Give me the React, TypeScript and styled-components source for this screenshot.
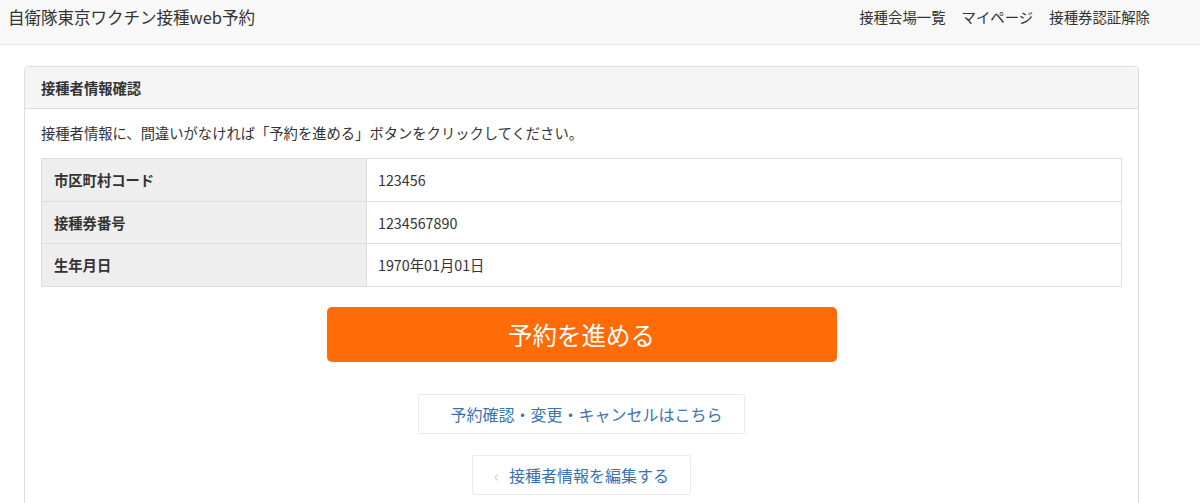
import React from 'react';
import styled, { createGlobalStyle } from 'styled-components';

const COLORS = {
  TEXT: '#333333',
  NAV_BG: '#f8f8f8',
  NAV_BORDER: '#e7e7e7',
  BORDER: '#dddddd',
  PANEL_HEAD: '#f5f5f5',
  LABEL_BG: '#eeeeee',
  ORANGE: '#ff6b07',
  LINK: '#3a72b0',
  WHITE: '#ffffff',
};

const FONT = `"Noto Sans CJK JP", "Noto Sans", "Liberation Sans", sans-serif`;

const rows = [
  { label: '市区町村コード', value: '123456' },
  { label: '接種券番号', value: '1234567890' },
  { label: '生年月日', value: '1970年01月01日' },
];

const navLinks = ['接種会場一覧', 'マイページ', '接種券認証解除'];

const GlobalStyle = createGlobalStyle`
  html, body {
    margin: 0;
    padding: 0;
    background: ${COLORS.WHITE};
    color: ${COLORS.TEXT};
    font-family: ${FONT};
  }

  * {
    box-sizing: border-box;
  }
`;

const App = () => (
  <>
    <GlobalStyle />
    <Navbar>
      <Brand>自衛隊東京ワクチン接種web予約</Brand>
      <NavList>
        {navLinks.map((link) => (
          <NavItem key={link}>{link}</NavItem>
        ))}
      </NavList>
    </Navbar>

    <Container>
      <Panel>
        <PanelHeading>接種者情報確認</PanelHeading>
        <PanelBody>
          <Lead>接種者情報に、間違いがなければ「予約を進める」ボタンをクリックしてください。</Lead>
          <InfoTable>
            <tbody>
              {rows.map((row) => (
                <tr key={row.label}>
                  <LabelCell>{row.label}</LabelCell>
                  <ValueCell>{row.value}</ValueCell>
                </tr>
              ))}
            </tbody>
          </InfoTable>

          <Actions>
            <PrimaryButton type="button">予約を進める</PrimaryButton>
            <LinkButton type="button" $top={32} $padLeft={31}>
              予約確認・変更・キャンセルはこちら
            </LinkButton>
            <LinkButton type="button" $top={21} $padLeft={21}>
              <Chevron>‹</Chevron>
              接種者情報を編集する
            </LinkButton>
          </Actions>
        </PanelBody>
      </Panel>
    </Container>
  </>
);

const Navbar = styled.header`
  align-items: center;
  background-color: ${COLORS.NAV_BG};
  border-bottom: 1px solid ${COLORS.NAV_BORDER};
  display: flex;
  height: 45px;
  justify-content: space-between;
  padding: 0 50px 10px 8px;
`;

const Brand = styled.div`
  font-size: 16.5px;
  line-height: 1;
  white-space: nowrap;
`;

const NavList = styled.nav`
  display: flex;
  gap: 16px;
`;

const NavItem = styled.span`
  font-size: 14.4px;
  line-height: 1;
  white-space: nowrap;
`;

const Container = styled.main`
  padding: 21px 61px 0 24px;
`;

const Panel = styled.section`
  border: 1px solid ${COLORS.BORDER};
  border-radius: 4px;
  min-height: 460px;
`;

const PanelHeading = styled.h3`
  align-items: center;
  background-color: ${COLORS.PANEL_HEAD};
  border-bottom: 1px solid ${COLORS.BORDER};
  border-radius: 3px 3px 0 0;
  display: flex;
  font-size: 14.3px;
  font-weight: bold;
  height: 42px;
  margin: 0;
  padding: 0 16px;
`;

const PanelBody = styled.div`
  padding: 14px 16px 0;
`;

const Lead = styled.p`
  font-size: 14.3px;
  line-height: 20px;
  margin: 0 0 15px;
`;

const InfoTable = styled.table`
  border: 1px solid ${COLORS.BORDER};
  border-collapse: collapse;
  width: 100%;
`;

const LabelCell = styled.th`
  background-color: ${COLORS.LABEL_BG};
  border: 1px solid ${COLORS.BORDER};
  font-size: 14.3px;
  font-weight: bold;
  height: 42.5px;
  padding: 0 12px;
  text-align: left;
  width: 325px;
`;

const ValueCell = styled.td`
  border: 1px solid ${COLORS.BORDER};
  font-size: 14.3px;
  height: 42.5px;
  padding: 0 11px;
`;

const Actions = styled.div`
  align-items: center;
  display: flex;
  flex-direction: column;
  padding-top: 20px;
`;

const PrimaryButton = styled.button`
  background-color: ${COLORS.ORANGE};
  border: none;
  border-radius: 5px;
  color: ${COLORS.WHITE};
  font-family: ${FONT};
  font-size: 24.5px;
  height: 55px;
  width: 510px;
`;

const LinkButton = styled.button<{ $top: number; $padLeft: number }>`
  align-items: center;
  background-color: ${COLORS.WHITE};
  border: 1px solid #eaeaea;
  border-radius: 2px;
  color: ${COLORS.LINK};
  display: flex;
  font-family: ${FONT};
  font-size: 16px;
  height: 40px;
  margin-top: ${({ $top }) => $top}px;
  padding: 0 21px 0 ${({ $padLeft }) => $padLeft}px;
`;

const Chevron = styled.span`
  color: #cccccc;
  font-size: 16px;
  margin-right: 10px;
`;

export default App;
